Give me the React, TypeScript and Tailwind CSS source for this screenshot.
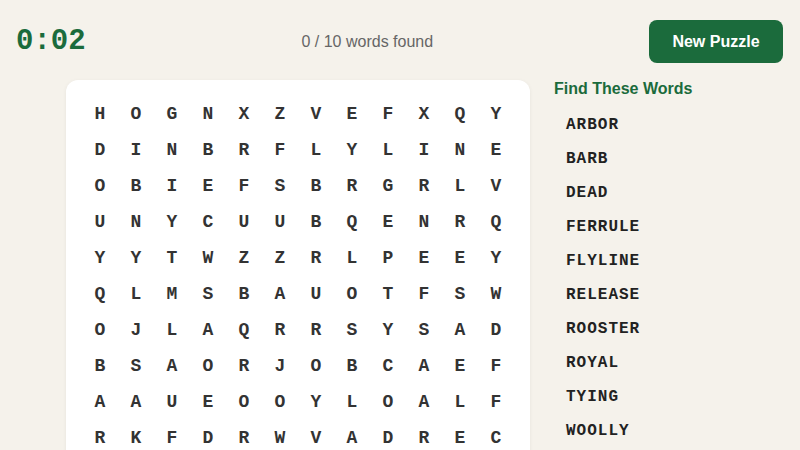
import React from "react";

const rows = [
  "HOGNXZVEFXQY",
  "DINBRFLYLINE",
  "OBIEFSBRGRLV",
  "UNYCUUBQENRQ",
  "YYTWZZRLPEEY",
  "QLMSBAUOTFSW",
  "OJLAQRRSYSAD",
  "BSAORJOBCAEF",
  "AAUEOOYLOALF",
  "RKFDRWVADREC",
];

const words = [
  "ARBOR",
  "BARB",
  "DEAD",
  "FERRULE",
  "FLYLINE",
  "RELEASE",
  "ROOSTER",
  "ROYAL",
  "TYING",
  "WOOLLY",
];

export default function App() {
  return (
    <div
      className="min-h-screen w-full bg-[#f5f2eb] overflow-hidden"
      style={{ fontFamily: '"Liberation Sans", Arial, sans-serif' }}
    >
      <header className="flex items-center justify-between pl-4 pr-[17px] pt-5 pb-[17px]">
        <div
          className="text-[29px] font-bold leading-none text-[#1b6b3c]"
          style={{ fontFamily: '"Liberation Mono", monospace' }}
        >
          0:02
        </div>
        <div className="text-base text-[#666666]">0 / 10 words found</div>
        <button className="h-[43px] w-[134px] rounded-lg bg-[#1b6b3c] text-base font-bold text-white">
          New Puzzle
        </button>
      </header>
      <main className="flex items-start justify-center gap-6">
        <div className="w-[464px] rounded-xl bg-white p-4 shadow-[0_1px_4px_rgba(0,0,0,0.06)]">
          <div className="grid grid-cols-12">
            {rows.map((row, r) =>
              row.split("").map((ch, c) => (
                <div
                  key={`${r}-${c}`}
                  className="flex h-9 w-9 items-center justify-center text-lg font-bold text-[#333333]"
                  style={{ fontFamily: '"Liberation Mono", monospace' }}
                >
                  {ch}
                </div>
              ))
            )}
          </div>
        </div>
        <div className="w-[180px]">
          <div className="mb-[10px] text-base font-bold leading-[18px] text-[#1b6b3c]">
            Find These Words
          </div>
          <div className="flex flex-col">
            {words.map((w) => (
              <div
                key={w}
                className="flex h-[34px] items-center pl-3 text-base font-bold tracking-[1px] text-[#222222]"
                style={{ fontFamily: '"Liberation Mono", monospace' }}
              >
                {w}
              </div>
            ))}
          </div>
        </div>
      </main>
    </div>
  );
}
